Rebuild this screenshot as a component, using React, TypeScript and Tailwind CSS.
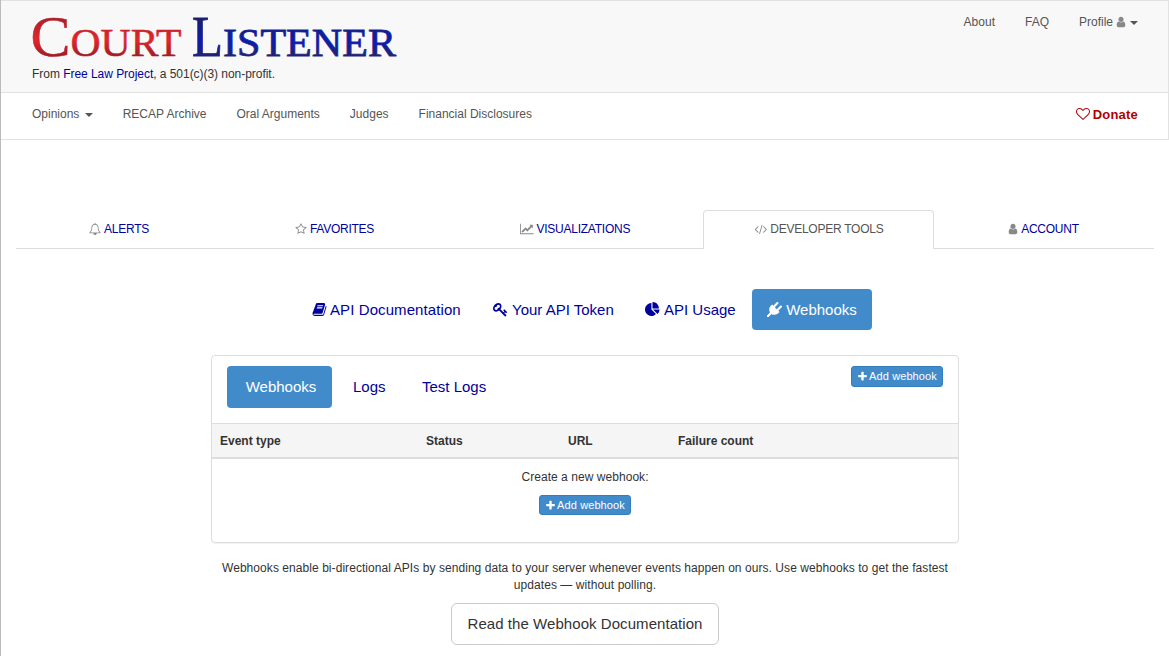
import React from "react";

const paths = {
  user: "M1536 1399q0 109-62.5 187t-150.5 78h-854q-88 0-150.5-78t-62.5-187q0-85 8.5-160.5t31.5-152 58.5-131 94-89 134.5-34.5q131 128 313 128t313-128q76 0 134.5 34.5t94 89 58.5 131 31.5 152 8.5 160.5zm-256-887q0 159-112.5 271.5t-271.5 112.5-271.5-112.5-112.5-271.5 112.5-271.5 271.5-112.5 271.5 112.5 112.5 271.5z",
  plus: "M1600 736v192q0 40-28 68t-68 28h-416v416q0 40-28 68t-68 28h-192q-40 0-68-28t-28-68v-416h-416q-40 0-68-28t-28-68v-192q0-40 28-68t68-28h416v-416q0-40 28-68t68-28h192q40 0 68 28t28 68v416h416q40 0 68 28t28 68z",
  heart: "M1664 596q0-81-21.5-143t-55-98.5-81.5-59.5-94-31-98-8-112 25.5-110.5 64-86.5 72-60 61.5q-18 22-49 22t-49-22q-24-28-60-61.5t-86.5-72-110.5-64-112-25.5-98 8-94 31-81.5 59.5-55 98.5-21.5 143q0 168 187 355l581 560 580-559q188-188 188-356zm128 0q0 221-229 450l-623 600q-18 18-44 18t-44-18l-624-602q-10-8-27.5-26t-55.5-65.5-68-97.5-53.5-121-23.5-138q0-220 127-344t351-124q62 0 126.5 21.5t120 58 95.5 68.5 76 68q36-36 76-68t95.5-68.5 120-58 126.5-21.5q224 0 351 124t127 344z",
  bell: "M912 1696q0-16-16-16-59 0-101.5-42.5t-42.5-101.5q0-16-16-16t-16 16q0 73 51.5 124.5t124.5 51.5q16 0 16-16zm-666-288h1300q-266-300-266-832 0-51-24-105t-69-103-121.5-80.5-169.5-31.5-169.5 31.5-121.5 80.5-69 103-24 105q0 532-266 832zm1482 0q0 52-38 90t-90 38h-448q0 106-75 181t-181 75-181-75-75-181h-448q-52 0-90-38t-38-90q50-42 91-88t85-119.5 74.5-158.5 50-206 19.5-260q0-152 117-282.5t307-158.5q-8-19-8-39 0-40 28-68t68-28 68 28 28 68q0 20-8 39 190 28 307 158.5t117 282.5q0 139 19.5 260t50 206 74.5 158.5 85 119.5 91 88z",
  star: "M1201 1004l306-297-422-62-189-382-189 382-422 62 306 297-73 421 378-199 377 199zm527-357q0 22-26 48l-363 354 86 500q1 7 1 20 0 50-41 50-19 0-40-12l-449-236-449 236q-22 12-40 12-21 0-31.5-14.5t-10.5-35.5q0-6 2-20l86-500-364-354q-25-27-25-48 0-37 56-46l502-73 225-455q19-41 49-41t49 41l225 455 502 73q56 9 56 46z",
  chart: "M2048 1536v128h-2048v-1536h128v1408h1920zm-128-1248v435q0 21-19.5 29.5t-35.5-7.5l-121-121-633 633q-10 10-23 10t-23-10l-233-233-416 416-192-192 585-585q10-10 23-10t23 10l233 233 464-464-121-121q-16-16-7.5-35.5t29.5-19.5h435q14 0 23 9t9 23z",
  code: "M681 1399l-50 50q-10 10-23 10t-23-10l-466-466q-10-10-10-23t10-23l466-466q10-10 23-10t23 10l50 50q10 10 10 23t-10 23l-393 393 393 393q10 10 10 23t-10 23zm591-1067l-373 1291q-4 13-15.5 19.5t-23.5 2.5l-62-17q-13-4-19.5-15.5t-2.5-24.5l373-1291q4-13 15.5-19.5t23.5-2.5l62 17q13 4 19.5 15.5t2.5 24.5zm657 651l-466 466q-10 10-23 10t-23-10l-50-50q-10-10-10-23t10-23l393-393-393-393q-10-10-10-23t10-23l50-50q10-10 23-10t23 10l466 466q10 10 10 23t-10 23z",
  book: "M1703 478q40 57 18 129l-275 906q-19 64-76.5 107.5t-122.5 43.5h-923q-77 0-148.5-53.5t-99.5-131.5q-24-67-2-127 0-4 3-27t4-37q1-8-3-21.5t-3-19.5q2-11 8-21t16.5-23.5 16.5-23.5q23-38 45-91.5t30-91.5q3-10 .5-30t-.5-28q3-11 17-28t17-23q21-36 42-92t25-90q1-9-2.5-32t.5-28q4-13 22-30.5t22-22.5q19-26 42.5-84.5t27.5-96.5q1-8-3-25.5t-2-26.5q2-8 9-18t18-23 17-21q8-12 16.5-30.5t15-35 16-36 19.5-32 26.5-23.5 36-11.5 47.5 5.5l-1 3q38-9 51-9h761q74 0 114 56t18 130l-274 906q-36 119-71.5 153.5t-128.5 34.5h-869q-27 0-38 15-11 16-1 43 24 70 144 70h923q29 0 56-15.5t35-41.5l300-987q7-22 5-57 38 15 59 43zm-1064 2q-4 13 2 22.5t20 9.5h608q13 0 25.5-9.5t16.5-22.5l21-64q4-13-2-22.5t-20-9.5h-608q-13 0-25.5 9.5t-16.5 22.5zm-83 256q-4 13 2 22.5t20 9.5h608q13 0 25.5-9.5t16.5-22.5l21-64q4-13-2-22.5t-20-9.5h-608q-13 0-25.5 9.5t-16.5 22.5z",
  key: "M832 512q0-80-56-136t-136-56-136 56-56 136q0 42 19 83-41-19-83-19-80 0-136 56t-56 136 56 136 136 56 136-56 56-136q0-42-19-83 41 19 83 19 80 0 136-56t56-136zm851 704q0 17-49 66t-66 49q-9 0-28.5-16t-36.5-33-38.5-40-24.5-26l-96 96 220 220q28 28 28 68 0 42-39 81t-81 39q-40 0-68-28l-671-671q-176 131-365 131-163 0-265.5-102.5t-102.5-265.5q0-160 95-313t248-248 313-95q163 0 265.5 102.5t102.5 265.5q0 189-131 365l355 355 96-96q-3-3-26-24.5t-40-38.5-33-36.5-16-28.5q0-17 49-66t66-49q13 0 23 10 6 6 46 44.5t82 79.5 86.5 86 73 78 28.5 41z",
  pie: "M768 890l546 546q-106 108-247.5 168t-298.5 60q-209 0-385.5-103t-279.5-279.5-103-385.5 103-385.5 279.5-279.5 385.5-103v762zm187 6h773q0 157-60 298.5t-168 247.5zm709-128h-768v-768q209 0 385.5 103t279.5 279.5 103 385.5z",
  plug: "M1755 453q37 38 37 90.5t-37 90.5l-401 400 150 150-160 160q-163 163-389.5 186.5t-411.5-100.5l-362 362h-181v-181l362-362q-124-185-100.5-411.5t186.5-389.5l160-160 150 150 400-401q38-37 91-37t90 37 37 90.5-37 90.5l-400 401 234 234 401-400q38-37 91-37t90 37z",
};

type IconProps = { name: keyof typeof paths; box?: string; className: string };

function Icon({ name, box = "0 0 1792 1792", className }: IconProps) {
  return (
    <svg viewBox={box} fill="currentColor" className={`shrink-0 ${className}`} aria-hidden="true">
      <path d={paths[name]} />
    </svg>
  );
}

function Caret({ className }: { className: string }) {
  return (
    <svg viewBox="0 0 8 4" fill="currentColor" className={`h-1 w-2 ${className}`} aria-hidden="true">
      <path d="M0 0h8L4 4z" />
    </svg>
  );
}

function Logo() {
  return (
    <svg width="368" height="54" viewBox="-2 -8 368 54" className="-ml-[2px] block overflow-visible font-['Liberation_Serif',serif]" role="img">
      <defs>
        <linearGradient id="red" gradientUnits="userSpaceOnUse" x1="0" y1="4" x2="0" y2="45">
          <stop offset="0" stopColor="#a5202a" />
          <stop offset="0.55" stopColor="#e3262c" />
          <stop offset="1" stopColor="#971d26" />
        </linearGradient>
        <linearGradient id="blue" gradientUnits="userSpaceOnUse" x1="0" y1="4" x2="0" y2="45">
          <stop offset="0" stopColor="#191f68" />
          <stop offset="0.6" stopColor="#0d1cae" />
          <stop offset="1" stopColor="#23236b" />
        </linearGradient>
      </defs>
      <g fill="url(#red)" stroke="url(#red)" strokeWidth="0.5">
        <text x="-1.5" y="43" fontSize="58" textLength="40" lengthAdjust="spacingAndGlyphs">C</text>
        <text x="38.5" y="43" fontSize="39" textLength="111" lengthAdjust="spacingAndGlyphs">OURT</text>
      </g>
      <g fill="url(#blue)" stroke="url(#blue)" strokeWidth="0.8">
        <text x="160" y="43" fontSize="58" textLength="31" lengthAdjust="spacingAndGlyphs">L</text>
        <text x="191" y="43" fontSize="39" textLength="173" lengthAdjust="spacingAndGlyphs">ISTENER</text>
      </g>
    </svg>
  );
}

function AddButton({ className }: { className: string }) {
  return (
    <button className={`flex w-[92px] items-center justify-center gap-[1px] rounded-[3px] border border-[#357ebd] bg-[#428bca] text-[11px] leading-[15px] whitespace-nowrap text-white ${className}`}>
      <Icon name="plus" className="size-[11px]" />
      <span className="tracking-[0.1px]">Add webhook</span>
    </button>
  );
}

const tab = "flex h-full items-center justify-center gap-[3px] border-b border-[#ddd] whitespace-nowrap text-[#00009c]";

export default function App() {
  return (
    <div className="h-[656px] overflow-hidden border-l border-[#bbb] bg-white font-['Liberation_Sans',Arial,sans-serif] text-xs leading-[17px] text-[#333]">
      <header className="border-t border-r border-[#e2e2e2]">
        <div className="flex h-[92px] justify-between border-b border-[#e2e2e2] bg-[#f8f8f8] pr-[30px] pl-[31px]">
          <div className="pt-1">
            <Logo />
            <p className="mt-[7px] tracking-[-0.04px] whitespace-nowrap">
              From <a className="text-[#00009c]">Free Law Project</a>, a 501(c)(3) non-profit.
            </p>
          </div>
          <nav className="flex gap-[30px] pt-[13px] whitespace-nowrap text-[#555]">
            <a>About</a>
            <a>FAQ</a>
            <a className="flex h-[17px] items-center">
              Profile
              <Icon name="user" className="-mt-[1px] ml-[2px] size-3 text-[#888]" />
              <Caret className="mt-px ml-[3px]" />
            </a>
          </nav>
        </div>
        <div className="flex h-[47px] items-start justify-between border-b border-[#e2e2e2] pt-[13px] pr-[30px] pl-[31px]">
          <nav className="flex gap-[30px] whitespace-nowrap text-[#555]">
            <a className="flex items-center">
              Opinions
              <Caret className="mt-px ml-[5.3px]" />
            </a>
            <a>RECAP Archive</a>
            <a>Oral Arguments</a>
            <a>Judges</a>
            <a>Financial Disclosures</a>
          </nav>
          <a className="flex items-center gap-[3px] text-[13px] font-bold tracking-[0.2px] text-[#b00000]">
            <Icon name="heart" className="-mt-px size-[14px]" />
            Donate
          </a>
        </div>
      </header>

      <nav className="mt-[70px] ml-[15px] flex h-[39px] w-[1138px] tracking-[-0.25px]">
        <a className={`${tab} w-[206px]`}>
          <Icon name="bell" className="-mt-px size-3 text-[#888]" />
          ALERTS
        </a>
        <a className={`${tab} w-[225px]`}>
          <Icon name="star" className="-mt-px size-3 text-[#888]" />
          FAVORITES
        </a>
        <a className={`${tab} w-[256px]`}>
          <Icon name="chart" box="0 0 2048 1792" className="-mt-px h-3 w-[13.7px] text-[#888]" />
          VISUALIZATIONS
        </a>
        <a className="flex h-full w-[231px] items-center justify-center gap-[3px] rounded-t border border-b-0 border-[#ddd] pb-[2px] whitespace-nowrap text-[#555]">
          <Icon name="code" box="0 0 2048 1792" className="h-3 w-[13.7px] text-[#888]" />
          DEVELOPER TOOLS
        </a>
        <a className={`${tab} w-[220px] pr-[2px]`}>
          <Icon name="user" className="-mt-px -mr-px size-3 text-[#888]" />
          ACCOUNT
        </a>
      </nav>

      <nav className="mt-10 ml-[296px] flex h-[41px] items-center text-[15px] whitespace-nowrap text-[#00009c]">
        <a className="flex w-[180px] items-center gap-[3px] pl-[15px] tracking-[0.09px]">
          <Icon name="book" className="size-[15px]" />
          API Documentation
        </a>
        <a className="flex w-[153px] items-center gap-[4px] pl-4">
          <Icon name="key" className="size-[15px]" />
          Your API Token
        </a>
        <a className="flex w-[122px] items-center gap-[4px] pl-[15px]">
          <Icon name="pie" className="size-[15px]" />
          API Usage
        </a>
        <a className="flex h-[41px] w-[120px] items-center justify-center gap-[4px] rounded bg-[#428bca] text-white">
          <Icon name="plug" className="size-[15px]" />
          Webhooks
        </a>
      </nav>

      <main className="ml-[210px] w-[748px]">
        <section className="mt-[25px] h-[188px] rounded border border-[#ddd] shadow-[0_1px_1px_rgba(0,0,0,0.05)]">
          <div className="flex h-[67px] items-start justify-between pt-[10px] pr-[15px] pl-[15px]">
            <nav className="flex h-[42px] text-[15px] leading-[41px] whitespace-nowrap text-[#00009c]">
              <a className="h-full w-[105px] rounded bg-[#428bca] pl-[3px] text-center text-white">Webhooks</a>
              <a className="w-[69px] pl-[21px]">Logs</a>
              <a className="pl-[21px]">Test Logs</a>
            </nav>
            <AddButton className="h-[21px]" />
          </div>
          <div className="grid h-9 grid-cols-[206px_142px_110px_1fr] items-center border-t border-b-2 border-[#ddd] bg-[#f5f5f5] pt-[2px] font-bold">
            <div className="pl-2">Event type</div>
            <div className="pl-2">Status</div>
            <div className="pl-2">URL</div>
            <div className="pl-2">Failure count</div>
          </div>
          <div className="flex flex-col items-center pt-[10px]">
            <p className="mb-[9px] tracking-[0.05px]">Create a new webhook:</p>
            <AddButton className="h-5" />
          </div>
        </section>
        <p className="mt-[17px] text-center tracking-[0.06px] whitespace-nowrap">
          Webhooks enable bi-directional APIs by sending data to your server whenever events happen on ours. Use webhooks to get the fastest
          <br />
          updates — without polling.
        </p>
        <div className="mt-[9px] flex justify-center">
          <button className="h-[42px] w-[268px] rounded-md border border-[#ccc] bg-white pb-[2px] text-[15px] tracking-[0.06px] whitespace-nowrap">
            Read the Webhook Documentation
          </button>
        </div>
      </main>
    </div>
  );
}
